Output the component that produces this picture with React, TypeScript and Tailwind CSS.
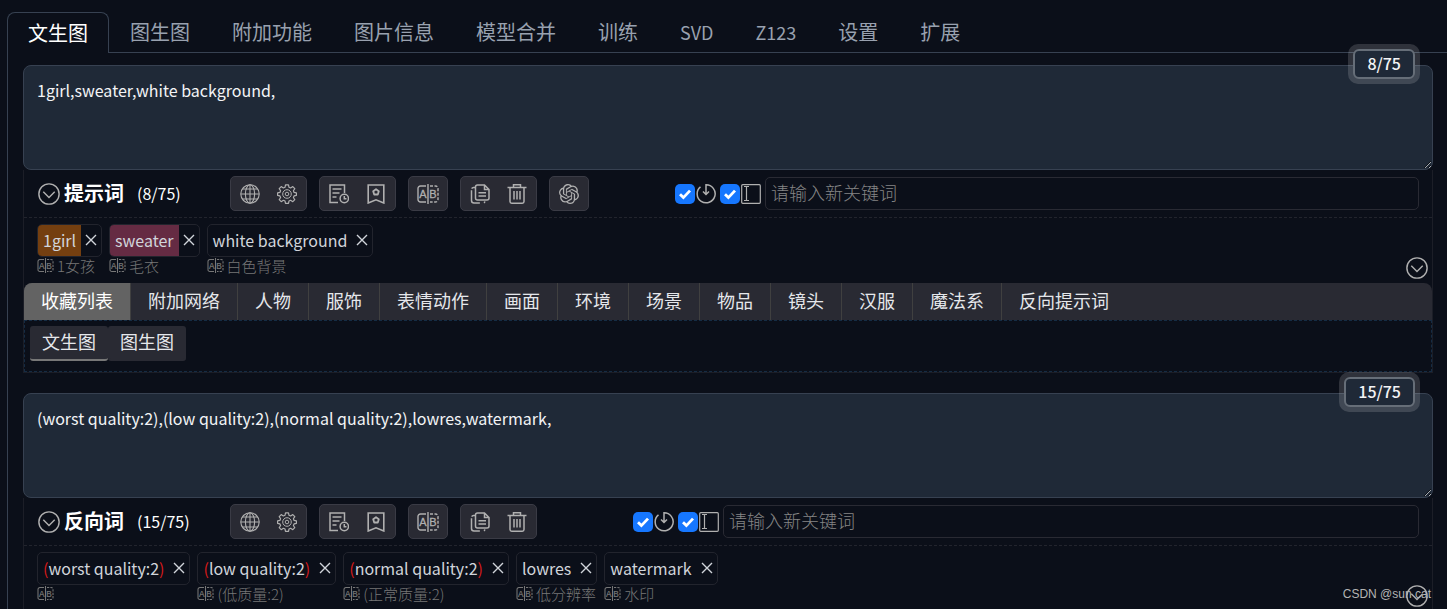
import { useState } from "react";
import type { ReactNode } from "react";
import { SiOpenai } from "react-icons/si";

type Tag = { text: string; translation: string; color?: string; weighted?: boolean };

const mainTabs = ["文生图", "图生图", "附加功能", "图片信息", "模型合并", "训练", "SVD", "Z123", "设置", "扩展"];

const groupTabs = [
  "收藏列表", "附加网络", "人物", "服饰", "表情动作", "画面", "环境",
  "场景", "物品", "镜头", "汉服", "魔法系", "反向提示词",
];

const subTabs = ["文生图", "图生图"];

const positiveTags: Tag[] = [
  { text: "1girl", translation: "1女孩", color: "bg-[#743f10]" },
  { text: "sweater", translation: "毛衣", color: "bg-[#652b43]" },
  { text: "white background", translation: "白色背景" },
];

const negativeTags: Tag[] = [
  { text: "worst quality:2", translation: "", weighted: true },
  { text: "low quality:2", translation: "(低质量:2)", weighted: true },
  { text: "normal quality:2", translation: "(正常质量:2)", weighted: true },
  { text: "lowres", translation: "低分辨率" },
  { text: "watermark", translation: "水印" },
];

function Icon({ children, className = "size-5" }: { children: ReactNode; className?: string }) {
  return (
    <svg viewBox="0 0 20 20" fill="none" stroke="currentColor" strokeWidth="1.3" className={`${className} shrink-0`} aria-hidden="true">
      {children}
    </svg>
  );
}

function ChevronCircle() {
  return (
    <Icon className="size-[22px]">
      <circle cx="10" cy="10" r="9.2" />
      <path d="M4.8 8l5.2 5.2L15.2 8" />
    </Icon>
  );
}

function GlobeIcon() {
  return (
    <Icon>
      <g strokeWidth="1.1">
        <circle cx="10" cy="10" r="9.2" />
        <ellipse cx="10" cy="10" rx="4.6" ry="9.2" />
        <path d="M10 .8v18.4M.8 10h18.4M2.6 5h14.8M2.6 15h14.8" />
      </g>
    </Icon>
  );
}

function GearIcon() {
  return (
    <Icon>
      <path strokeWidth="1.2" strokeLinejoin="round" d="M8.5.8h3l.5 2.5 1.6.7 2.2-1.4 2 2-1.4 2.2.7 1.6 2.3.5v2.4l-2.3.6-.7 1.6 1.4 2.2-2 2-2.2-1.4-1.6.7-.5 2.3h-3l-.5-2.3-1.6-.7-2.2 1.4-2-2 1.4-2.2-.7-1.6-2.3-.6V8.9l2.3-.5.7-1.6-1.4-2.2 2-2L6.400 4l1.600-.7z" />
      <circle cx="10" cy="10" r="4.3" strokeWidth="1" />
      <circle cx="10" cy="10" r="1.8" strokeWidth="1" />
    </Icon>
  );
}

function HistoryIcon() {
  return (
    <Icon>
      <path strokeWidth="1.5" d="M9 18.5H1V1h14.500v8M3.500 5h9M3.500 9h7M3.500 13h4" />
      <circle cx="15.3" cy="14.500" r="4.2" strokeWidth="1.5" />
      <path strokeWidth="1.500" d="M15.300 12v2.800h2.200" />
    </Icon>
  );
}

function BookmarkIcon() {
  return (
    <Icon>
      <path strokeWidth="1.6" d="M2.200 1h15.600v18L10 15.800 2.200 19z" />
      <path strokeWidth="1.8" strokeLinejoin="round" d="M10 5.200l2.800 2.100-1 3.200H8.200l-1-3.200z" />
    </Icon>
  );
}

function TranslateIcon({ className = "h-5 w-[22px]" }: { className?: string }) {
  return (
    <svg viewBox="0 0 22 20" fill="none" stroke="currentColor" strokeWidth="1.4" className={`${className} shrink-0`} aria-hidden="true">
      <path d="M9 2H3.500A2.500 2.500 0 0 0 1 4.500v11A2.500 2.500 0 0 0 3.500 18H9M11 0v20" />
      <path strokeDasharray="3 1.5" d="M13 2h5.500A2.500 2.500 0 0 1 21 4.500v11a2.500 2.500 0 0 1-2.500 2.500H13" />
      <g fontSize="11" textAnchor="middle" fill="currentColor" strokeWidth="0.3" className="font-['Liberation_Sans',sans-serif]">
        <text x="6" y="14">A</text>
        <text x="15.8" y="14">B</text>
      </g>
    </svg>
  );
}

function CopyIcon() {
  return (
    <Icon>
      <path strokeWidth="1.5" d="M7.500 1h7l4.500 4.500v8.500a2 2 0 0 1-2 2H7.500a2 2 0 0 1-2-2V3a2 2 0 0 1 2-2zM14.500 1v4.500H19M8.500 8.800h7.500M8.500 12h7.500" />
      <path strokeWidth="1.5" strokeDasharray="4 1.5 20" d="M5.500 3.500h-2a2 2 0 0 0-2 2v11a2.500 2.500 0 0 0 2.500 2.500h9a2 2 0 0 0 2-2" />
    </Icon>
  );
}

function TrashIcon() {
  return (
    <Icon>
      <path strokeWidth="1.5" d="M.5 3.500h19M6.500 3V.8h7V3M3 3.500v14a1.700 1.700 0 0 0 1.700 1.700h10.600a1.700 1.700 0 0 0 1.700-1.700v-14M7 7v8.500M10 7v8.500M13 7v8.500" />
    </Icon>
  );
}

function TimerIcon() {
  return (
    <Icon>
      <path strokeWidth="1.5" d="M4.500 2.800a9 9 0 1 0 5.500-2v9M7 7.500l3 3 3-3" />
    </Icon>
  );
}

function CursorBoxIcon() {
  return (
    <Icon>
      <rect x=".7" y=".7" width="18.6" height="18.6" rx="1" strokeWidth="1.2" />
      <path strokeWidth="1.2" d="M3 2.500h5M3 16.500h5M5.500 2.500v14" />
    </Icon>
  );
}

function CloseIcon() {
  return (
    <svg viewBox="0 0 12 12" stroke="currentColor" strokeWidth="1.4" className="size-3" aria-hidden="true">
      <path d="M1 1l10 10M11 1L1 11" />
    </svg>
  );
}

function ButtonGroup({ items }: { items: [string, ReactNode][] }) {
  return (
    <div className="flex h-[35px] min-w-10 shrink-0 items-center justify-center gap-[17px] rounded-[5px] border border-[#3a3b45] bg-[#292a33] px-[9px]">
      {items.map(([label, icon]) => (
        <button key={label} type="button" aria-label={label} className="flex w-5 justify-center text-[#b0b0b0] hover:text-white">
          {icon}
        </button>
      ))}
    </div>
  );
}

function Checkbox({ label }: { label: string }) {
  return (
    <span className="grid size-5 shrink-0 place-items-center">
      <input type="checkbox" defaultChecked aria-label={label} className="peer col-start-1 row-start-1 size-5 appearance-none rounded-[5px] bg-[#3a3b45] checked:bg-[#1677ff]" />
      <svg viewBox="0 0 20 20" fill="none" stroke="white" strokeWidth="2.8" className="pointer-events-none invisible col-start-1 row-start-1 size-5 peer-checked:visible" aria-hidden="true">
        <path d="M5 10.200l3.400 3.400 6.600-7" />
      </svg>
    </span>
  );
}

function TagItem({ tag }: { tag: Tag }) {
  return (
    <li className="flex flex-col">
      <div className="flex h-[33px] self-start overflow-hidden rounded-[5px] border border-[#22242d]">
        <span className={`flex items-center px-[5px] pb-0.5 text-base text-[#d1d5db] ${tag.color ?? ""}`}>
          {tag.weighted && <span className="text-[#d61a1a]">(</span>}
          {tag.text}
          {tag.weighted && <span className="text-[#d61a1a]">)</span>}
        </span>
        <button type="button" aria-label={`删除 ${tag.text}`} className="flex w-5 items-center justify-center pb-0.5 text-[#d1d5db]">
          <CloseIcon />
        </button>
      </div>
      <div className="flex h-[19px] items-center gap-[3px] pb-0.5 text-[15px] leading-[17px] font-light text-[#777]">
        <TranslateIcon className="h-[15px] w-[17px]" />
        {tag.translation}
      </div>
    </li>
  );
}

function PromptSection(props: {
  title: string;
  count: string;
  value: string;
  tags: Tag[];
  ai?: boolean;
  keywordMargin: string;
  className?: string;
  children?: ReactNode;
}) {
  const { title, count, value, tags, ai, keywordMargin, className = "", children } = props;
  return (
    <section className={`flex flex-col ${className}`}>
      <div className="relative">
        <textarea
          aria-label={title}
          defaultValue={value}
          className="block h-[105px] w-full resize-y rounded-lg border border-[#374151] bg-[#1f2937] px-[13px] py-3 text-base text-gray-100 scheme-dark outline-none"
        />
        <div className="absolute -top-[21px] right-[13px] rounded-[10px] bg-white/15 p-[5px]">
          <div className="flex h-[30px] items-center rounded-md border-2 border-[#666e78] bg-[#1f2937] px-3 pb-0.5 text-base font-medium text-gray-100">
            {count}
          </div>
        </div>
      </div>

      <div className="flex grow flex-col border-x border-[#1c1e27]">
        <div className="flex h-12 items-center border-b border-dashed border-[#22242d] pr-[13px] pl-[14px]">
          <div className="flex w-48 shrink-0 items-center">
            <button type="button" aria-label="折叠" className="text-[#b0b0b0]"><ChevronCircle /></button>
            <h2 className="ml-1 pb-0.5 text-xl font-bold text-white">{title}</h2>
            <span className="ml-[13px] pb-0.5 text-base text-white">({count})</span>
          </div>
          <div className="flex gap-3">
            <ButtonGroup items={[["语言", <GlobeIcon />], ["设置", <GearIcon />]]} />
            <ButtonGroup items={[["历史", <HistoryIcon />], ["收藏", <BookmarkIcon />]]} />
            <ButtonGroup items={[["翻译", <TranslateIcon />]]} />
            <ButtonGroup items={[["复制", <CopyIcon />], ["清空", <TrashIcon />]]} />
            {ai && <ButtonGroup items={[["ChatGPT", <SiOpenai size={20} />]]} />}
          </div>
          <div className={`flex grow items-center text-[#b0b0b0] ${keywordMargin}`}>
            <div className="flex gap-1">
              <span className="flex gap-px"><Checkbox label="自动翻译" /><TimerIcon /></span>
              <span className="flex gap-px"><Checkbox label="自动输入" /><CursorBoxIcon /></span>
            </div>
            <input
              type="text"
              aria-label="新关键词"
              placeholder="请输入新关键词"
              className="ml-1 h-[33px] min-w-0 grow rounded-[5px] border border-[#292a33] bg-transparent px-[5px] pb-1 text-lg font-light text-gray-100 outline-none placeholder:text-[#858585]"
            />
          </div>
        </div>

        <div className="relative flex h-[65px] px-[13px] pt-[6px]">
          <ul className="flex gap-[7px]">
            {tags.map((tag) => (
              <TagItem key={tag.text} tag={tag} />
            ))}
          </ul>
          <button type="button" aria-label="展开" className="absolute right-1 bottom-1 text-[#b0b0b0]"><ChevronCircle /></button>
        </div>
        {children}
      </div>
    </section>
  );
}

function KeywordGroups() {
  const [group, setGroup] = useState("收藏列表");
  const [sub, setSub] = useState("文生图");

  return (
    <div className="border-b border-[#1c1e27]">
      <div className="flex h-[37px] overflow-hidden rounded-t-lg bg-[#292a33]">
        {groupTabs.map((name) => (
          <button
            key={name}
            type="button"
            onClick={() => setGroup(name)}
            className={`px-[17px] pb-1 text-lg whitespace-nowrap not-last:border-r not-last:border-[#404040] ${name === group ? "bg-[#636363] text-white" : "text-gray-200"}`}
          >
            {name}
          </button>
        ))}
      </div>
      <div className="flex h-[52px] items-start border border-dashed border-[#152c44] p-[5px]">
        {subTabs.map((name) => (
          <button
            key={name}
            type="button"
            onClick={() => setSub(name)}
            className={`h-[35px] rounded-[3px] border-b-2 bg-[#292a33] px-3 pb-1 text-lg text-gray-200 ${name === sub ? "border-[#777]" : "border-[#292a33]"}`}
          >
            {name}
          </button>
        ))}
      </div>
    </div>
  );
}

export default function App() {
  const [tab, setTab] = useState("文生图");

  return (
    <div className="relative flex h-screen flex-col overflow-hidden bg-[#0b0f19] pt-3 pl-[7px] font-['Noto_Sans_CJK_SC',sans-serif]">
      <nav className="flex h-[41px] shrink-0">
        {mainTabs.map((name) => (
          <button
            key={name}
            type="button"
            onClick={() => setTab(name)}
            className={`whitespace-nowrap ${/^[A-Z]/.test(name) ? "text-lg" : "text-xl"} ${
              name === tab
                ? "rounded-t-lg border-x border-t border-[#374151] px-5 text-white"
                : "border-b border-[#374151] px-[21px] text-gray-400"
            }`}
          >
            {name}
          </button>
        ))}
        <div className="grow border-b border-[#374151]" />
      </nav>

      <main className="flex grow flex-col gap-5 border-l border-[#374151] pt-3 pr-[14px] pl-[15px]">
        <PromptSection title="提示词" count="8/75" value="1girl,sweater,white background," tags={positiveTags} ai keywordMargin="ml-[86px]">
          <KeywordGroups />
        </PromptSection>
        <PromptSection
          title="反向词"
          count="15/75"
          value="(worst quality:2),(low quality:2),(normal quality:2),lowres,watermark,"
          tags={negativeTags}
          keywordMargin="ml-24"
          className="grow"
        />
      </main>

      <p className="absolute right-4 bottom-[7px] font-['Liberation_Sans',sans-serif] text-xs text-[#b4b4b4]">CSDN @sun cat</p>
    </div>
  );
}
